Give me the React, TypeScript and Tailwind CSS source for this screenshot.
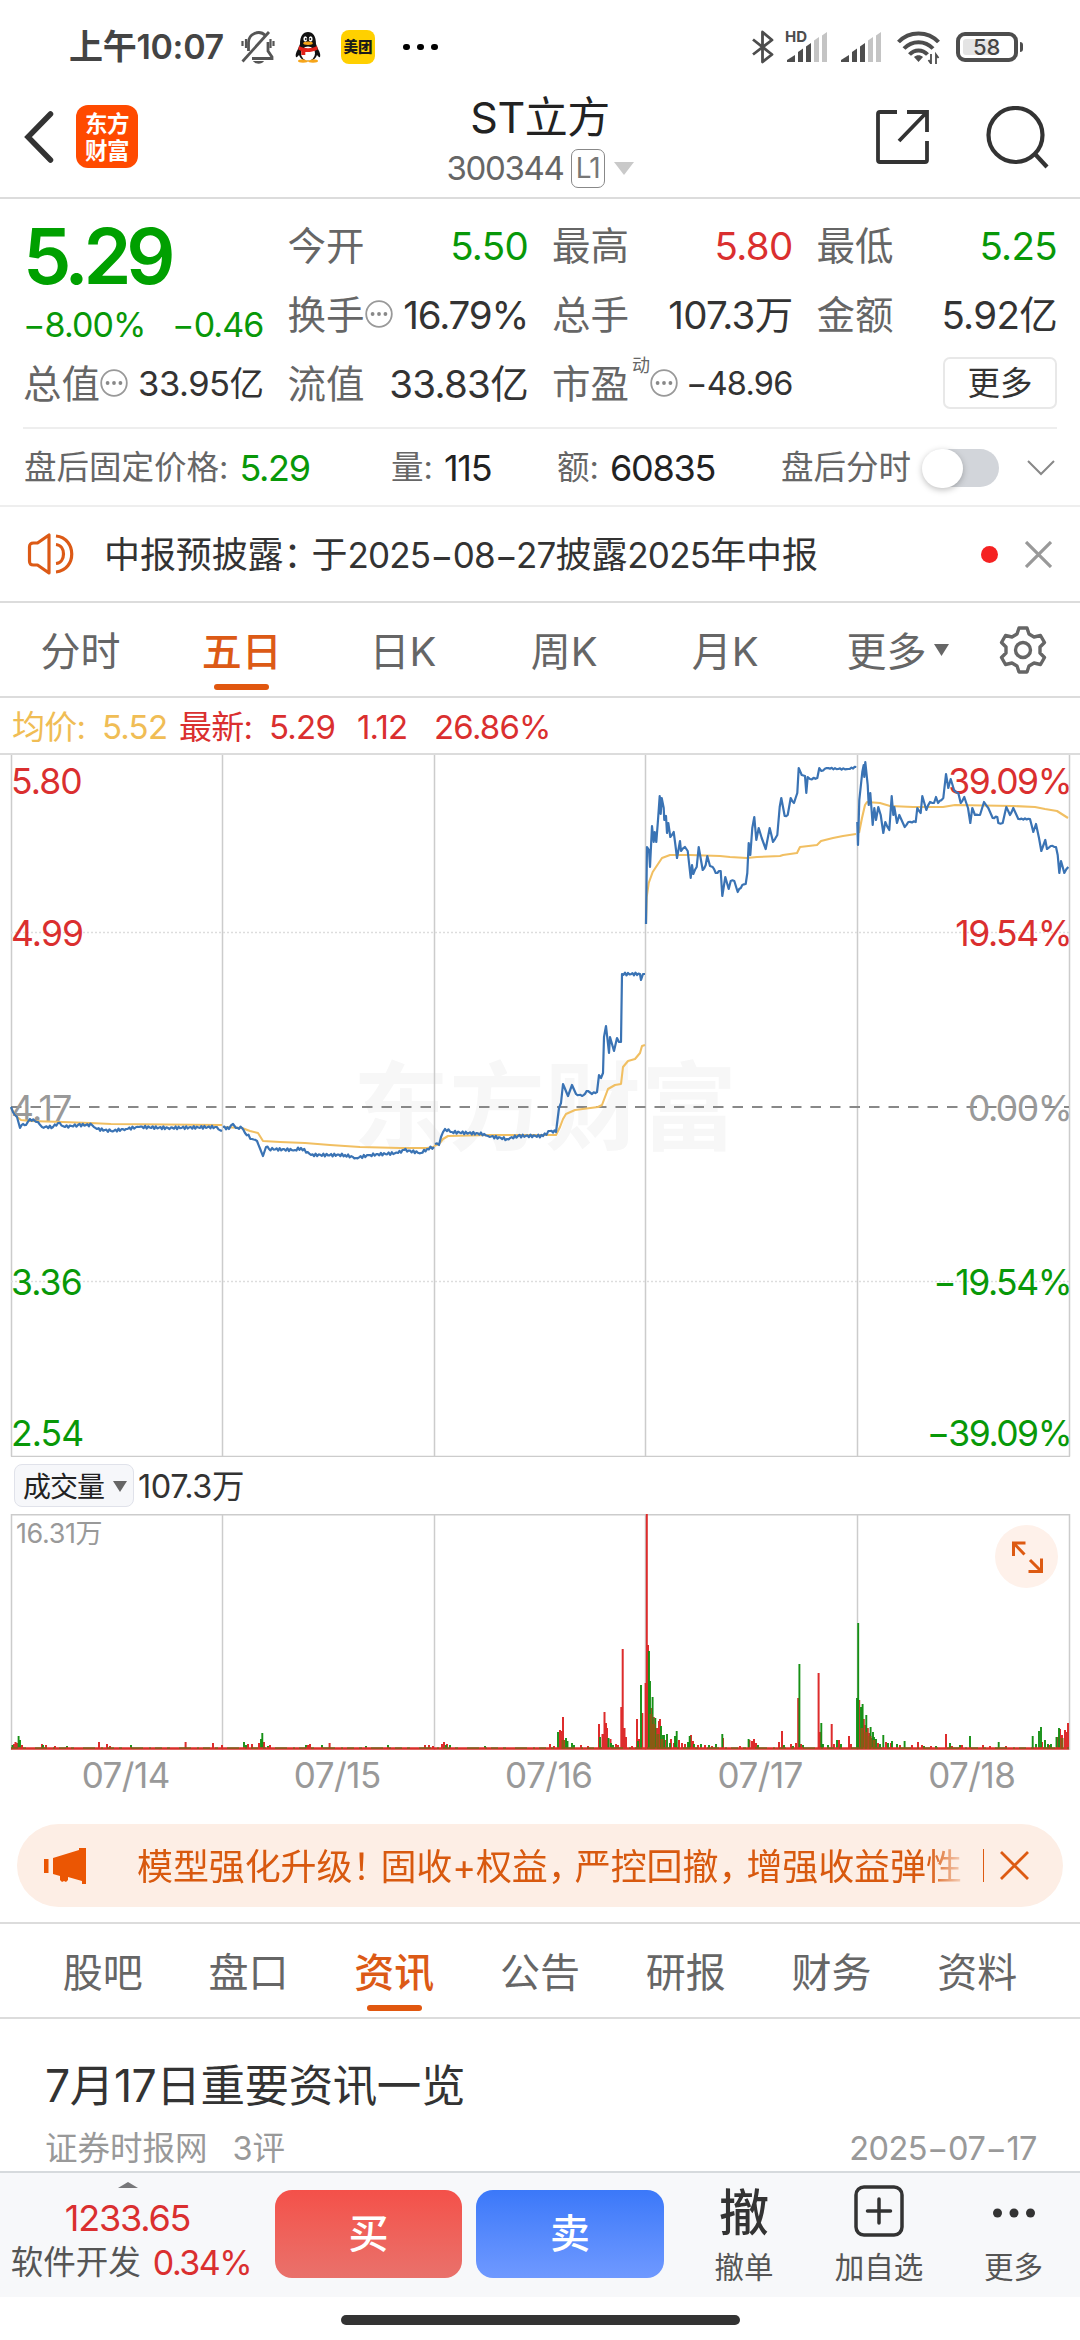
import type { ReactNode } from 'react';

type Tone = 'up' | 'down' | 'plain';
type Point = [number, number];

interface Quote {
  label: string;
  value: string;
  tone?: Tone;
  info?: boolean;
  sup?: string;
  small?: boolean;
}

const TONE_CLASS: Record<Tone, string> = {
  up: 'text-[#da2f2f]',
  down: 'text-[#089808]',
  plain: 'text-[#333]',
};

const QUOTE_COLUMNS: Quote[][] = [
  [
    { label: '今开', value: '5.50', tone: 'down' },
    { label: '换手', value: '16.79%', info: true },
    { label: '流值', value: '33.83亿' },
  ],
  [
    { label: '最高', value: '5.80', tone: 'up' },
    { label: '总手', value: '107.3万' },
    { label: '市盈', value: '−48.96', info: true, sup: '动', small: true },
  ],
  [
    { label: '最低', value: '5.25', tone: 'down' },
    { label: '金额', value: '5.92亿' },
  ],
];

const PERIOD_TABS = ['分时', '五日', '日K', '周K', '月K', '更多'];
const INFO_TABS = ['股吧', '盘口', '资讯', '公告', '研报', '财务', '资料'];
const DATES = ['07/14', '07/15', '07/16', '07/17', '07/18'];
const DAY_LINES = [222.5, 434.5, 645.5, 857.5];

// one polyline per trading day, the gap between days stays open
const PRICE_DAYS: Point[][] = [
  [[11, 352], [15, 360], [17, 362], [20, 373], [23, 369], [26, 370], [30, 364], [38, 367], [42, 372], [53, 372], [58, 368], [65, 372], [78, 370], [92, 370], [97, 374], [111, 376], [126, 374], [139, 372], [168, 373], [215, 372], [222, 376]],
  [[223, 372], [229, 374], [233, 369], [236, 373], [242, 373], [245, 378], [252, 384], [257, 386], [263, 401], [266, 392], [269, 394], [295, 395], [301, 393], [311, 400], [345, 400], [356, 403], [370, 400], [398, 398], [404, 395], [421, 398], [427, 394], [434, 392]],
  [[435, 389], [439, 390], [441, 382], [445, 374], [452, 377], [484, 379], [488, 381], [507, 384], [518, 381], [543, 381], [550, 376], [556, 377], [559, 353], [561, 348], [563, 329], [568, 341], [572, 330], [576, 339], [582, 341], [588, 336], [592, 339], [597, 337], [599, 320], [601, 323], [603, 318], [604, 282], [606, 271], [609, 298], [610, 282], [614, 296], [617, 283], [619, 287], [621, 287], [622, 219], [640, 219], [641, 225], [643, 219], [645, 219]],
  [[646, 169], [647, 92], [649, 95], [650, 112], [652, 71], [653.7, 87], [654.7, 77], [656.3, 87], [658, 65], [659.7, 41], [660.7, 59], [661.7, 43], [663.7, 53], [664.3, 65], [666, 61], [667, 78], [668.3, 68], [670.3, 82], [673.7, 77], [677, 103], [680, 86], [681, 96], [685, 92], [687.7, 96], [690.7, 123], [692, 110], [693.3, 119], [696.7, 112], [698.7, 92], [702.7, 115], [705.7, 110], [707.3, 101], [710, 111], [712.7, 112], [715.7, 118], [720.7, 116], [722.3, 141], [725.3, 122], [728.7, 134], [730.7, 126], [734.3, 126], [737.7, 137], [742.3, 130], [745.7, 129], [747.3, 118], [748.7, 88], [750.3, 100], [752.3, 73], [754.3, 62], [756.3, 85], [758.7, 73], [761.7, 83], [765.7, 94], [769.7, 73], [773, 87], [777.3, 80], [779.7, 52], [781.3, 43], [784.7, 61], [787.7, 60], [790.7, 43], [794, 48], [797.3, 38], [798.7, 13], [801.7, 20], [805, 21], [806.3, 38], [807.7, 22], [810, 24], [817.3, 23], [819.3, 13], [821.3, 16], [826.7, 13], [838.3, 14], [848.3, 14], [856.3, 12]],
  [[857.3, 67], [858, 90], [859.3, 45], [860.7, 32], [862.3, 17], [863.7, 10], [864.3, 22], [865.3, 7], [867.7, 30], [868.7, 50], [870.3, 38], [872.7, 70], [874.3, 53], [876, 65], [878.3, 52], [880.7, 60], [883.3, 78], [885.3, 67], [889.3, 75], [891.7, 41], [893.3, 60], [894.3, 52], [897, 68], [899.3, 60], [904.7, 72], [908.3, 67], [915.7, 67], [917.3, 53], [920.7, 58], [922.3, 41], [926.3, 55], [930, 47], [934, 48], [936, 42], [938, 48], [943.3, 43], [946, 19], [948.3, 33], [950.7, 24], [954, 35], [958.3, 38], [960.7, 48], [964.3, 42], [968, 53], [970.3, 68], [972.3, 53], [975, 60], [980, 60], [984, 47], [988.3, 53], [992.7, 63], [997.3, 62], [998.3, 68], [1002.7, 68], [1006.3, 52], [1010, 60], [1013.3, 53], [1018.3, 64], [1030, 64], [1033.3, 77], [1036, 69], [1039, 83], [1041.3, 96], [1045.3, 85], [1047, 94], [1050.7, 91], [1056, 92], [1057.7, 100], [1059.3, 118], [1061, 106], [1064.3, 118], [1068.3, 112]],
];

const AVERAGE_DAYS: Point[][] = [
  [[11, 353], [16, 361], [21, 365], [30, 366], [63, 367], [90, 368], [111, 369], [222, 370]],
  [[223, 372], [242, 373], [250, 376], [258, 378], [263, 386], [280, 387], [305, 388], [330, 390], [360, 392], [400, 393], [427, 393], [434, 392]],
  [[434, 391], [439, 389], [443, 384], [448, 381], [490, 380], [556, 380], [560, 372], [563, 364], [566, 359], [575, 355], [598, 352], [602, 350], [605, 342], [608, 334], [615, 330], [621, 329], [623, 312], [628, 306], [635, 304], [640, 298], [642, 291], [645, 290]],
  [[646, 169], [646.7, 142], [648.7, 128], [652.7, 117], [658, 109], [662, 103], [670, 100], [690, 100], [720, 101], [730, 102], [747, 103], [757, 102], [780, 101], [783, 100], [797, 98], [800, 92], [817, 90], [821, 86], [833, 83], [843, 81], [856, 79]],
  [[859, 78], [862, 63], [865, 50], [867, 47], [880, 48], [890, 51], [913, 52], [943, 52], [955, 50], [1013, 51], [1035, 52], [1045, 54], [1057, 56], [1068, 63]],
];

// [x, height], split by tick direction
const UP_BARS: Point[] = [
  [14, 5], [15.5, 7], [17, 6], [22, 4], [42, 5], [46, 4], [55, 3], [99, 7], [107, 5], [110, 3], [185.6, 7], [213, 6], [222, 4], [248, 5], [252, 5], [259, 6], [264, 7], [270, 4], [308, 4], [310, 5], [329.6, 6], [425, 4], [429, 4], [433, 3], [442, 5], [444, 7], [447, 5],
  [550, 5], [554, 3], [560, 19], [561.5, 18], [563, 32], [564.5, 9], [581, 4], [588, 3], [599, 25], [602.5, 15], [604.5, 37], [606, 26], [607, 21], [610.5, 10], [616, 5], [618, 4], [621.3, 42], [622.7, 100], [624.5, 21], [626, 12], [632, 3], [637, 30], [639, 10], [642.3, 36], [645.6, 66], [646.8, 235], [648, 104], [651, 41], [653.8, 32], [657, 21], [659, 28], [660, 30], [665, 9], [671, 10], [674, 6], [679, 9], [682, 6], [685, 5], [691, 14], [693, 8], [698, 4], [705, 4], [712, 3], [723, 11], [740, 3], [749.5, 9], [752, 8], [754, 10], [756, 6], [779, 7], [782, 18], [791, 5], [796, 6], [798.2, 51], [801, 5], [818.6, 76], [820, 17], [831.7, 25], [834, 5], [839, 9], [849, 13], [851, 5],
  [859.2, 49], [863.8, 30], [865, 24], [867.8, 21], [869, 16], [872, 11], [875, 10], [878, 6], [886, 7], [891, 6], [900, 4], [912, 4], [918, 7], [922, 4], [931, 3], [946, 15], [952, 3], [962, 4], [983, 4], [990, 3], [1006, 3], [1042, 7], [1049, 4], [1058, 12], [1060, 20], [1062, 14], [1065, 19], [1066.5, 17], [1068, 26],
];
const DOWN_BARS: Point[] = [
  [12.5, 4], [18.6, 13], [20, 9], [43, 4], [67, 3], [131, 4], [244, 7], [246, 4], [261, 10], [262.3, 16], [268, 3], [306, 4], [322, 4], [366, 3], [388, 4], [446, 4], [450, 4], [485, 3],
  [558, 17], [566, 11], [567.5, 8], [572, 6], [574, 4], [600, 12], [608.5, 11], [611, 6], [613, 4], [638, 8], [641, 64], [649, 98], [650, 68], [652.6, 52], [655.3, 31], [661, 23], [663, 14], [664, 14], [667, 15], [670, 6], [675, 13], [676.7, 18], [688, 7], [689.7, 13], [694, 5], [701, 5], [709, 4], [716, 5], [722.3, 15], [748.6, 10], [758, 4], [784, 4], [793, 3], [799.4, 85], [803, 4], [821.3, 26], [823, 5], [828, 4], [837, 9], [841, 5],
  [857, 51], [858.2, 126], [861, 42], [862.6, 45], [866.3, 34], [870.6, 22], [873, 17], [874, 12], [876, 10], [880, 5], [883.3, 14], [888, 6], [892, 8], [897, 5], [904.6, 8], [924, 3], [936, 3], [950, 6], [960, 4], [970, 13], [998.7, 7], [1032.7, 13], [1036, 5], [1039, 18], [1041, 22], [1045, 9], [1048, 5], [1051, 5], [1056.5, 12], [1059, 21],
];

// small tick noise between the anchors, the same on every render
function withTicks(points: Point[], size: number): Point[] {
  const result: Point[] = [points[0]];
  for (let i = 1; i < points.length; i++) {
    const [x0, y0] = points[i - 1];
    const [x1, y1] = points[i];
    const steps = Math.floor((x1 - x0) / 1.5);
    const flat = Math.abs(y1 - y0) < 9;
    for (let s = 1; s < steps; s++) {
      const t = s / steps;
      const noise = flat ? Math.sin(s * 2.6 + x0) * size : 0;
      result.push([x0 + (x1 - x0) * t, y0 + (y1 - y0) * t + noise]);
    }
    result.push([x1, y1]);
  }
  return result;
}

function toPoints(points: Point[]) {
  return points.map(([x, y]) => `${x.toFixed(1)},${y.toFixed(1)}`).join(' ');
}

function toBars(bars: Point[]) {
  return bars.map(([x, h]) => `M${x} 235v-${h}`).join('');
}

function InfoDot() {
  return (
    <svg className="-mt-1 h-7 w-7 shrink-0" viewBox="0 0 28 28" fill="none">
      <circle cx="14" cy="14" r="12.8" stroke="#999" strokeWidth="1.8" />
      <circle cx="7.6" cy="14" r="1.9" fill="#888" />
      <circle cx="14" cy="14" r="1.9" fill="#888" />
      <circle cx="20.4" cy="14" r="1.9" fill="#888" />
    </svg>
  );
}

function SignalBars() {
  return (
    <svg className="h-[30px] w-10" viewBox="0 0 40 30">
      <g fill="#4d4d4d">
        <path d="M0 30v-2l8-5v7z" />
        <path d="M11 30V20l5-3.5V30z" />
        <path d="M19 30V14.5l5-3.5V30z" />
      </g>
      <g fill="#c4c4c4">
        <path d="M27 30V8.5l5-3.5V30z" />
        <path d="M35 30V3.5L40 0v30z" />
      </g>
    </svg>
  );
}

function StatusBar() {
  return (
    <div className="flex h-[94px] items-center justify-between pr-[57px] pl-[69px]">
      <div className="flex items-center">
        <span className="w-[157px] text-[34px] font-semibold tracking-[-0.3px] whitespace-nowrap text-[#444]">上午10:07</span>
        <svg className="ml-[15px] h-[34px] w-[34px]" viewBox="0 0 34 34" fill="none" stroke="#555" strokeWidth="2.8">
          <path d="M7.5 21V13a10 10 0 0 1 17-7.5M27 12v9l4 6v1.5H11" />
          <path d="M1.5 31.5 28 2" />
          <path d="M1.5 11v5M5 9v9M32.5 11v5M29.5 9v9" strokeWidth="2.2" />
          <path d="M12 31h11c-2 3.5-9 3.5-11 0z" fill="#555" stroke="none" />
        </svg>
        <svg className="ml-4 h-[34px] w-[34px]" viewBox="0 0 34 34">
          <path d="M5 27c-1-3 1-6 2-8l2-5C9 6 12 2 17 2s8 4 8 12l2 5c1 2 3 5 2 8-1 1-3-2-3-2-1 3-4 6-9 6s-8-3-9-6c0 0-2 3-3 2z" fill="#111" />
          <ellipse cx="12" cy="31" rx="5" ry="1.7" fill="#f6a51a" />
          <ellipse cx="22" cy="31" rx="5" ry="1.7" fill="#f6a51a" />
          <ellipse cx="17" cy="23.5" rx="7" ry="7" fill="#fff" />
          <path d="M8 16c6 3 12 3 18 0l.8 3.5c-5 2.5-9 2.8-12.5 2.5v3h-4v-4l-3-1.500z" fill="#e2231a" />
          <ellipse cx="14.3" cy="9" rx="1.9" ry="2.7" fill="#fff" />
          <ellipse cx="19.7" cy="9" rx="1.9" ry="2.7" fill="#fff" />
          <ellipse cx="17" cy="13.3" rx="4.8" ry="1.7" fill="#f6a51a" />
          <circle cx="14.8" cy="9" r="0.9" fill="#111" />
          <circle cx="19.3" cy="9" r="0.9" fill="#111" />
        </svg>
        <span className="ml-4 flex h-[34px] w-[34px] items-center justify-center rounded-lg bg-[#ffd000] text-[14.5px] font-black text-[#1a1a1a]">美团</span>
        <span className="ml-[28px] flex gap-[7.5px]">
          <i className="h-[6.5px] w-[6.5px] rounded-full bg-black" />
          <i className="h-[6.5px] w-[6.5px] rounded-full bg-black" />
          <i className="h-[6.5px] w-[6.5px] rounded-full bg-black" />
        </span>
      </div>
      <div className="flex items-center">
        <svg className="h-[34px] w-[22px]" viewBox="0 0 22 34" fill="none" stroke="#4d4d4d" strokeWidth="2.8" strokeLinejoin="round">
          <path d="M1 9.5 20 24.5 10.5 32V2L20 10 1 24.5" />
        </svg>
        <div className="relative ml-[13px] flex h-[30px] w-10">
          <SignalBars />
          <span className="absolute -top-[3px] -left-[2px] text-[15px] leading-none font-bold text-[#4d4d4d]">HD</span>
        </div>
        <div className="ml-[14px] flex">
          <SignalBars />
        </div>
        <svg className="ml-4 h-[34px] w-[43px]" viewBox="0 0 43 34" fill="none" stroke="#4d4d4d" strokeWidth="4">
          <path d="M1.5 12C12 .5 31 .5 41.5 12" />
          <path d="M7 18.5c8-8.5 21-8.5 29 0" />
          <path d="M12.5 24.5c5-5.5 13-5.5 18 0" />
          <path d="M21.5 32l-4.5-5c2.5-2.2 6.5-2.2 9 0z" fill="#4d4d4d" stroke="none" />
          <path d="M34 24v9.5l-2.5-3.5M39 34v-9.5l2.5 3.5" strokeWidth="1.8" />
        </svg>
        <div className="ml-4 flex h-[30px] w-[62px] rounded-[9px] border-[4px] border-[#4d4d4d] p-[3px]">
          <div className="flex h-full w-[33px] items-center rounded-[3px] bg-[#e4e4e4] pl-[10px] text-[22px] font-medium text-[#444]">58</div>
        </div>
        <i className="ml-[2px] h-[10px] w-[3px] rounded-r bg-[#4d4d4d]" />
      </div>
    </div>
  );
}

function Header() {
  return (
    <header className="flex h-[105px] items-start border-b-2 border-[#dcdcdc]">
      <div className="flex w-[360px] pt-[11px] pl-[22px]">
        <svg className="mt-1 h-[58px] w-[34px]" viewBox="0 0 34 58" fill="none" stroke="#333" strokeWidth="5.5" strokeLinecap="round">
          <path d="M28.500 5 6 28l22.500 23" />
        </svg>
        <div className="ml-5 flex h-[63px] w-[62px] flex-col items-center justify-center rounded-[12px] bg-[#ff4a00] text-[22.5px] leading-[27px] font-bold tracking-[-0.5px] text-white">
          <span>东方</span>
          <span>财富</span>
        </div>
      </div>
      <div className="flex w-[360px] flex-col items-center">
        <div className="mt-[-2px] text-[43px] leading-[50px] tracking-[-0.5px] text-[#222]">ST立方</div>
        <div className="mt-[6px] flex h-10 items-center">
          <span className="text-[33px] tracking-[-1.3px] text-[#666]">300344</span>
          <span className="ml-[7px] flex h-[39px] w-[34px] items-center justify-center rounded-[7px] border border-[#888] text-[28px] tracking-[-1px] text-[#777]">L1</span>
          <svg className="ml-[9px] h-[13px] w-5" viewBox="0 0 20 13">
            <path d="M0 0h20L10 13z" fill="#c9c9c9" />
          </svg>
        </div>
      </div>
      <div className="flex flex-1 justify-end pr-[30px]">
        <svg className="mt-[15px] h-[56px] w-[56px]" viewBox="0 0 56 56" fill="none" stroke="#333" strokeWidth="3.8">
          <path d="M23 3H6a2 2 0 0 0-2 2v46a2 2 0 0 0 2 2h45a2 2 0 0 0 2-2V32" />
          <path d="M33 3h20v20M53 3 25 32" />
        </svg>
        <svg className="mt-[12px] ml-14 h-[64px] w-[64px]" viewBox="0 0 64 64" fill="none" stroke="#333" strokeWidth="4.2">
          <circle cx="29.5" cy="29" r="27" />
          <path d="M49 48l12 13" />
        </svg>
      </div>
    </header>
  );
}

function QuoteRow({ label, value, tone = 'plain', info, sup, small }: Quote) {
  return (
    <div className="flex h-[69px] items-center justify-between">
      <span className="flex items-center text-[38.5px] text-[#666]">
        {label}
        {sup && <sup className="top-[-19px] ml-[3px] text-[18px] leading-none">{sup}</sup>}
        {info && <InfoDot />}
      </span>
      <span className={`whitespace-nowrap ${small ? 'text-[32.5px] tracking-[-0.8px]' : info ? 'text-[38.5px] tracking-[-1.2px]' : 'text-[38.5px] tracking-[-0.7px]'} ${TONE_CLASS[tone]}`}>{value}</span>
    </div>
  );
}

function QuotePanel() {
  return (
    <section className="px-[23px]">
      <div className="flex h-[230px] gap-6 border-b-2 border-[#eee] pt-[13px]">
        <div className="w-[241px]">
          <div className="flex h-[88px] items-center text-[77px] font-semibold tracking-[-5.3px] text-[#00a000]">5.29</div>
          <div className="flex h-[50px] items-center justify-between text-[34px] tracking-[-0.9px] text-[#089808]">
            <span>−8.00%</span>
            <span>−0.46</span>
          </div>
          <div className="flex h-[69px] items-center justify-between">
            <span className="flex items-center text-[38.5px] text-[#666]">
              总值
              <InfoDot />
            </span>
            <span className="text-[34.5px] tracking-[-0.5px] text-[#333]">33.95亿</span>
          </div>
        </div>
        {QUOTE_COLUMNS.map(column => (
          <div key={column[0].label} className="w-[241px]">
            {column.map(quote => (
              <QuoteRow key={quote.label} {...quote} />
            ))}
            {column.length < 3 && (
              <button className="mt-[7px] ml-auto flex h-[52px] w-[114px] items-center justify-center rounded-[7px] border-2 border-[#e8e8e8] pt-[2px] text-[32.5px] text-[#333]">更多</button>
            )}
          </div>
        ))}
      </div>
    </section>
  );
}

function AfterHours() {
  return (
    <section className="flex h-[78px] items-center border-b-2 border-[#eee] pt-[2px] pl-6 text-[32.5px] whitespace-nowrap text-[#666]">
      <div className="flex w-[367px] items-center gap-[11px]">
        <span>盘后固定价格:</span>
        <span className="text-[36px] tracking-[-1.3px] text-[#089808]">5.29</span>
      </div>
      <div className="flex w-[166px] items-center gap-[11px]">
        <span>量:</span>
        <span className="text-[36px] tracking-[-1.2px] text-[#222]">115</span>
      </div>
      <div className="flex w-[224px] items-center gap-[11px]">
        <span>额:</span>
        <span className="text-[36px] tracking-[-1.2px] text-[#222]">60835</span>
      </div>
      <span>盘后分时</span>
      <div className="ml-[12px] flex h-[38px] w-[76px] items-center rounded-full bg-[#d2d5da]">
        <i className="-ml-[1px] h-[39px] w-[41px] rounded-full bg-white shadow-[0_2px_6px_rgba(0,0,0,0.25)]" />
      </div>
      <svg className="ml-[28px] h-[16px] w-[28px]" viewBox="0 0 28 16" fill="none" stroke="#888" strokeWidth="2">
        <path d="M1 1l13 13L27 1" />
      </svg>
    </section>
  );
}

function Notice() {
  return (
    <section className="flex h-[96px] items-center border-b-2 border-[#dcdcdc] pr-[28px] pl-[27px]">
      <svg className="h-[42px] w-[48px]" viewBox="0 0 48 42" fill="none" stroke="#dc5a16" strokeWidth="3.2" strokeLinejoin="round">
        <path d="M2.5 14c0-3 1-4 4-4h4L22 2v38l-11.5-8h-4c-3 0-4-1-4-4z" />
        <path d="M29 11.5c10 1 10 18 0 19M29 3c21 2 21 34 0 36" />
      </svg>
      <span className="ml-[29px] pt-[2px] text-[36px] tracking-[-0.1px] whitespace-nowrap text-[#333]">
        中报预披露<span className="tracking-[-8px]">：</span>于<span className="text-[35px] tracking-[-0.8px]">2025−08−27</span>披露<span className="text-[35px] tracking-[-0.8px]">2025</span>年中报
      </span>
      <i className="ml-auto h-[17px] w-[17px] rounded-full bg-[#f52222]" />
      <svg className="ml-[27px] h-[27px] w-[27px]" viewBox="0 0 27 27" stroke="#999" strokeWidth="3.2">
        <path d="M1 1l25 25M26 1 1 26" />
      </svg>
    </section>
  );
}

function Tab({ label, active, children }: { label: string; active: boolean; children?: ReactNode }) {
  return (
    <div className={`relative flex h-full flex-1 items-center justify-center pt-[4px] text-[40px] ${active ? 'font-medium text-[#dc5a16]' : 'text-[#666]'}`}>
      {label}
      {children}
      {active && <i className="absolute bottom-[6px] h-[6px] w-[55px] rounded-full bg-[#e1570f]" />}
    </div>
  );
}

function PeriodTabs() {
  return (
    <nav className="flex h-[95px] items-center border-b-2 border-[#dcdcdc]">
      <div className="flex h-full w-[967px]">
        {PERIOD_TABS.map(tab => (
          <Tab key={tab} label={tab} active={tab === '五日'}>
            {tab === '更多' && (
              <svg className="absolute top-[41px] left-[128px] h-[12px] w-[15px]" viewBox="0 0 15 12">
                <path d="M0 0h15L7.5 12z" fill="#666" />
              </svg>
            )}
          </Tab>
        ))}
      </div>
      <svg className="mt-[1px] ml-[31px] h-[50px] w-[50px]" viewBox="0 0 50 50" fill="none" stroke="#666" strokeWidth="3.4" strokeLinejoin="round">
        <path d="M21 3h8l2 6 5 3 6.500-1.500 4 7L42 22v6l4.500 4.500-4 7L36 38l-5 3-2 6h-8l-2-6-5-3-6.500 1.500-4-7L8 28v-6l-4.500-4.500 4-7L14 12l5-3z" />
        <circle cx="25" cy="25" r="7.5" />
      </svg>
    </nav>
  );
}

function ChartLegend() {
  return (
    <div className="flex h-[57px] items-center border-b-2 border-[#dcdcdc] pt-[3px] pl-3 text-[33px] tracking-[-0.8px] whitespace-pre text-[#da2f2f]">
      <span className="w-[90px] text-[#f0bd55]">均价:</span>
      <span className="w-[77px] text-[#f0bd55]">5.52</span>
      <span className="w-[90px]">最新:</span>
      <span className="w-[88px]">5.29</span>
      <span className="w-[77px]">1.12</span>
      <span>26.86%</span>
    </div>
  );
}

function PriceChart() {
  return (
    <div className="relative h-[702px] text-[35.5px] leading-[40px] tracking-[-1.5px]">
      <svg className="block h-full w-full" viewBox="0 0 1080 702" fill="none">
        <text x="353" y="387" fontSize="96" fontWeight="700" fill="#f7f7f7" letterSpacing="0">东方财富</text>
        <path d="M11.5 0v701.5M1069.5 0v701.5M11 701.5h1059" stroke="#ccc" strokeWidth="1.5" />
        {DAY_LINES.map(x => (
          <path key={x} d={`M${x} 0v702`} stroke="#ccc" strokeWidth="1.5" />
        ))}
        <path d="M11 177.5h1058M11 526.5h1058" stroke="#ddd" strokeWidth="1.5" strokeDasharray="2 2" />
        <path d="M11 352h1058" stroke="#888" strokeWidth="2" strokeDasharray="10.5 9" />
      </svg>
      <span className="absolute top-[7px] left-[11px] tracking-[-0.9px] text-[#da2f2f]">5.80</span>
      <span className="absolute top-[159px] left-[11px] tracking-[-0.9px] text-[#da2f2f]">4.99</span>
      <span className="absolute top-[334px] left-[11px] tracking-[-0.7px] text-[#999]">4.17</span>
      <span className="absolute top-[508px] left-[11px] tracking-[-0.9px] text-[#089808]">3.36</span>
      <span className="absolute top-[659px] left-[11px] tracking-[-0.9px] text-[#089808]">2.54</span>
      <span className="absolute top-[7px] right-[9px] text-[#da2f2f]">39.09%</span>
      <span className="absolute top-[159px] right-[9px] text-[#da2f2f]">19.54%</span>
      <span className="absolute top-[334px] right-[9px] text-[#999]">0.00%</span>
      <span className="absolute top-[508px] right-[9px] text-[#089808]">−19.54%</span>
      <span className="absolute top-[659px] right-[9px] text-[#089808]">−39.09%</span>
      <svg className="absolute inset-0 h-full w-full" viewBox="0 0 1080 702" fill="none" strokeLinejoin="round">
        {AVERAGE_DAYS.map((day, i) => (
          <polyline key={i} points={toPoints(day)} stroke="#f1bf62" strokeWidth="2.1" />
        ))}
        {PRICE_DAYS.map((day, i) => (
          <polyline key={i} points={toPoints(withTicks(day, i > 2 ? 0.7 : 1.4))} stroke="#3a73b4" strokeWidth="2.2" />
        ))}
      </svg>
    </div>
  );
}

function VolumeChart() {
  return (
    <section>
      <div className="flex h-[57px] items-center pl-[14px]">
        <div className="flex h-[43px] w-[120px] items-center rounded-[8px] border border-[#e0e2ea] bg-[#f6f7fa] pt-[2px] pl-[8px] text-[28px] tracking-[-1px] text-[#222]">
          成交量
          <svg className="ml-[9px] h-[11px] w-[14px]" viewBox="0 0 14 11">
            <path d="M0 0h14L7 11z" fill="#666" />
          </svg>
        </div>
        <span className="ml-[4px] pt-[3px] text-[32.5px] tracking-[-0.4px] text-[#333]">107.3万</span>
      </div>
      <div className="relative h-[236px]">
        <svg className="block h-full w-full" viewBox="0 0 1080 236" fill="none">
          <path d="M11.5 236V.75h1058V236" stroke="#ccc" strokeWidth="1.5" />
          {DAY_LINES.map(x => (
            <path key={x} d={`M${x} 0v236`} stroke="#ccc" strokeWidth="1.5" />
          ))}
          <path d={toBars(UP_BARS)} stroke="#dd2c2c" strokeWidth="2" />
          <path d={toBars(DOWN_BARS)} stroke="#169016" strokeWidth="1.9" />
          <path d="M11 234.5h1058" stroke="#d92f2a" strokeWidth="2.5" />
          <path d="M11 234h1058" stroke="#4a7a12" strokeWidth="1.2" strokeDasharray="7 5 3 9 12 6 2 4" />
          <path d="M862 214v21M866 218v17M870 222v13M874 226v9M651 200v35M654 210v25M658 220v15M662 225v10M563 226v9M1062 224v11" stroke="#8a5a14" strokeWidth="3" />
        </svg>
        <span className="absolute top-[3px] left-4 text-[27px] leading-[34px] tracking-[-0.4px] text-[#999]">16.31万</span>
        <div className="absolute top-[11px] right-[22px] flex h-[63px] w-[63px] items-center justify-center rounded-full bg-[#fef1ea]">
          <svg className="h-8 w-8" viewBox="0 0 32 32" fill="none" stroke="#dd5a12" strokeWidth="3">
            <path d="M14.5 2H2.5v13M2.5 2 13.5 13.5M17.5 30.5h13v-13M30.5 30.5 19 19" />
          </svg>
        </div>
      </div>
      <div className="flex h-[50px] items-center pl-[20px] text-[35px] tracking-[-0.5px] text-[#999]">
        {DATES.map(date => (
          <span key={date} className="w-[211.5px] text-center">{date}</span>
        ))}
      </div>
    </section>
  );
}

function PromoBanner() {
  return (
    <div className="mx-[17px] mt-[24px] flex h-[83px] items-center rounded-full bg-[#fdeee5] pr-[34px] pl-[27px]">
      <svg className="h-[38px] w-[43px]" viewBox="0 0 43 38" fill="#eb5603">
        <path d="M0 12h4.5v14H0zM9 11l26-8V1h7v36h-4v-3l-14-4v3l-2 2-2-1-2 1-2-2v-4l-7-2z" />
      </svg>
      <div className="ml-[50px] w-[833px] mask-r-from-95% pt-[2px] text-[36px] tracking-[-0.1px] whitespace-nowrap text-[#d8590f]">
        模型强化升级<span className="tracking-[-8px]">！</span>固收+权益<span className="tracking-[-9px]">，</span>严控回撤<span className="tracking-[-8px]">，</span>增强收益弹性
      </div>
      <i className="ml-auto h-[33px] w-[1.5px] bg-[#dd5a12]" />
      <svg className="ml-[16px] h-[29px] w-[29px]" viewBox="0 0 29 29" stroke="#dd5a12" strokeWidth="2.8">
        <path d="M1 1l27 27M28 1 1 28" />
      </svg>
    </div>
  );
}

function News() {
  return (
    <article className="h-[152px] px-[45px] pt-[40px]">
      <h2 className="text-[44.5px] leading-[54px] tracking-[-0.4px] text-[#333]">7月17日重要资讯一览</h2>
      <div className="-mr-[2px] mt-[16px] flex h-[40px] items-center text-[32.5px] text-[#999]">
        <span>证券时报网</span>
        <span className="ml-[25px]">3评</span>
        <span className="ml-auto tracking-[-0.5px]">2025−07−17</span>
      </div>
    </article>
  );
}

function ActionBar() {
  return (
    <footer className="flex h-[126px] border-t-2 border-[#d6dadd] bg-[#f7f8fa]">
      <div className="flex w-[262px] flex-col items-center pt-[9px] pr-[7px]">
        <svg className="h-[6px] w-5" viewBox="0 0 20 6">
          <path d="M0 6 10 0l10 6z" fill="#77777a" />
        </svg>
        <span className="mt-[9px] text-[36px] leading-[42px] tracking-[-1.2px] text-[#da2f2f]">1233.65</span>
        <div className="mt-[3px] ml-[7px] flex items-center gap-[12px] text-[32.5px] leading-[42px] whitespace-nowrap text-[#555]">
          软件开发
          <span className="text-[34px] tracking-[-1.5px] text-[#da2f2f]">0.34%</span>
        </div>
      </div>
      <button className="mt-[17px] ml-[13px] h-[88px] w-[187px] rounded-[17px] bg-linear-to-b from-[#f45049] to-[#e9716b] text-[40px] font-medium text-white">买</button>
      <button className="mt-[17px] ml-[14px] h-[88px] w-[188px] rounded-[17px] bg-linear-to-b from-[#3b78f9] to-[#6f99ff] text-[40px] font-medium text-white">卖</button>
      <div className="flex flex-1 pl-[13px] text-[29.5px] text-[#555]">
        <div className="flex w-[134px] flex-col items-center">
          <span className="mt-[12px] h-[56px] text-[50px] leading-[56px] font-medium text-[#333]">撤</span>
          <span className="mt-[6px] leading-[40px]">撤单</span>
        </div>
        <div className="flex w-[136px] flex-col items-center">
          <svg className="mt-[12px] h-[52px] w-[50px]" viewBox="0 0 50 52" fill="none" stroke="#333" strokeWidth="3.5">
            <rect x="2" y="2" width="46" height="48" rx="8" />
            <path d="M25 14v24M13.5 26h23" strokeLinecap="round" />
          </svg>
          <span className="mt-[10px] leading-[40px]">加自选</span>
        </div>
        <div className="flex w-[133px] flex-col items-center">
          <svg className="mt-[12px] h-[52px] w-[44px]" viewBox="0 0 44 52" fill="#333">
            <circle cx="5.5" cy="28" r="4.5" />
            <circle cx="22" cy="28" r="4.5" />
            <circle cx="38.5" cy="28" r="4.5" />
          </svg>
          <span className="mt-[10px] leading-[40px]">更多</span>
        </div>
      </div>
    </footer>
  );
}

export default function App() {
  return (
    <div className="flex h-[2340px] w-[1080px] flex-col overflow-hidden bg-white font-['Inter','Noto_Sans_CJK_SC',sans-serif] leading-none">
      <StatusBar />
      <Header />
      <QuotePanel />
      <AfterHours />
      <Notice />
      <PeriodTabs />
      <ChartLegend />
      <PriceChart />
      <VolumeChart />
      <PromoBanner />
      <nav className="mt-[15px] flex h-[97px] border-y-2 border-[#dcdcdc] px-[30px]">
        {INFO_TABS.map(tab => (
          <Tab key={tab} label={tab} active={tab === '资讯'} />
        ))}
      </nav>
      <News />
      <ActionBar />
      <div className="flex flex-1 justify-center pt-[18px]">
        <i className="h-[10px] w-[399px] rounded-full bg-[#333]" />
      </div>
    </div>
  );
}
